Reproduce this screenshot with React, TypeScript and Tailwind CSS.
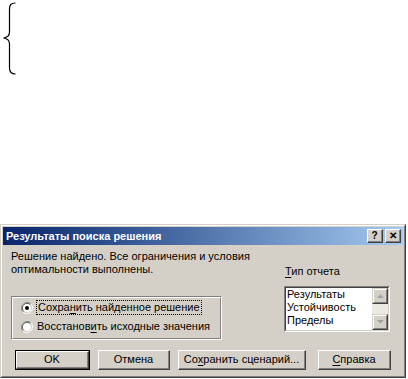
import React from 'react';

const font = { fontFamily: '"Liberation Sans", Arial, sans-serif' };

function Brace() {
  return (
    <svg width="18" height="76" viewBox="0 0 18 76" className="ml-[1px] mt-[1px]">
      <path
        d="M14.5 2 C10 2 8.5 4 8.5 8 L8.5 31 C8.5 35 6 36.5 2.5 37 C6 37.5 8.5 39 8.5 43 L8.5 67 C8.5 71 10 73 14.5 73"
        fill="none"
        stroke="#000"
        strokeWidth="1.2"
      />
    </svg>
  );
}

function U({ children }: { children: React.ReactNode }) {
  return <span className="underline underline-offset-[2px]">{children}</span>;
}

function Radio({ checked }: { checked?: boolean }) {
  return (
    <svg width="12" height="12" viewBox="0 0 12 12" className="shrink-0">
      <path d="M10.5 2.2 A5.5 5.5 0 1 0 2.2 10.5" fill="none" stroke="#808080" />
      <path d="M9.6 3 A4.5 4.5 0 1 0 3 9.6" fill="none" stroke="#404040" />
      <path d="M1.5 9.8 A5.5 5.5 0 0 0 9.8 1.5" fill="none" stroke="#fff" />
      <path d="M2.4 9 A4.5 4.5 0 0 0 9 2.4" fill="none" stroke="#d4d0c8" />
      <circle cx="6" cy="6" r="4" fill="#fff" />
      {checked && <circle cx="6" cy="6" r="2" fill="#000" />}
    </svg>
  );
}

function Btn({ children, w, def }: { children: React.ReactNode; w: string; def?: boolean }) {
  return (
    <div className={`${w} h-[20px] shrink-0 ${def ? 'border border-black' : ''} bg-[#d4d0c8]`}>
      <div className="h-full w-full border-t border-l border-white border-r border-b border-r-[#404040] border-b-[#404040]">
        <div className="flex h-full w-full items-center justify-center whitespace-nowrap border-r border-b border-[#808080] text-[11px] text-black">
          {children}
        </div>
      </div>
    </div>
  );
}

function ScrollArrow({ down }: { down?: boolean }) {
  return (
    <div className="h-[16px] w-[16px] bg-[#d4d0c8] border-t border-l border-[#d4d0c8] border-r border-b border-r-[#404040] border-b-[#404040]">
      <div className="flex h-full w-full items-center justify-center border-t border-l border-white border-r border-b border-r-[#808080] border-b-[#808080]">
        <svg width="7" height="4" viewBox="0 0 7 4">
          <path d={down ? 'M0 0 H7 L3.5 3.5 Z' : 'M0 4 H7 L3.5 0.5 Z'} fill="#a0a0a0" />
        </svg>
      </div>
    </div>
  );
}

function TitleButton({ children }: { children: React.ReactNode }) {
  return (
    <div className="h-[14px] w-[16px] bg-[#d4d0c8] border-t border-l border-white border-r border-b border-r-[#404040] border-b-[#404040]">
      <div className="flex h-full w-full items-center justify-center border-r border-b border-[#808080] text-[10px] font-bold leading-none text-black">
        {children}
      </div>
    </div>
  );
}

export default function App() {
  return (
    <div className="flex h-[379px] w-[408px] flex-col bg-white" style={font}>
      {/* formula brace */}
      <div className="h-[224px]">
        <Brace />
      </div>

      {/* dialog */}
      <div className="w-[406px] border border-t-[#d4d0c8] border-l-[#d4d0c8] border-r-[#404040] border-b-[#404040] bg-[#d4d0c8]">
        <div className="border border-t-white border-l-white border-r-[#808080] border-b-[#808080] p-[1px]">
          <div className="flex h-[18px] items-center justify-between bg-gradient-to-r from-[#0a246a] to-[#a6caf0] pl-[3px] pr-[2px]">
            <span className="text-[11px] font-bold text-white">Результаты поиска решения</span>
            <div className="flex gap-[2px]">
              <TitleButton>?</TitleButton>
              <TitleButton>✕</TitleButton>
            </div>
          </div>

          <div className="px-[8px] pt-[5px] pb-[5px] text-[11px] text-black">
            <div className="flex justify-between">
              <div className="w-[211px]">
                <p className="whitespace-nowrap leading-[13px]">
                  Решение найдено. Все ограничения и условия
                  <br />
                  оптимальности выполнены.
                </p>
                <div className="mt-[20px] h-[44px] border border-t-[#808080] border-l-[#808080] border-r-white border-b-white">
                  <div className="flex h-full flex-col gap-[5px] border border-t-white border-l-white border-r-[#808080] border-b-[#808080] pl-[8px] pt-[2px]">
                    <div className="flex items-center gap-[3px] whitespace-nowrap">
                      <Radio checked />
                      <span className="border border-dotted border-black px-[1px] leading-[13px]">
                        Сохра<U>н</U>ить найденное решение
                      </span>
                    </div>
                    <div className="flex items-center gap-[4px] whitespace-nowrap">
                      <Radio />
                      <span className="leading-[13px]">
                        Восстанов<U>и</U>ть исходные значения
                      </span>
                    </div>
                  </div>
                </div>
              </div>

              <div className="mr-[5px] w-[106px] pt-[15px]">
                <div className="pl-[1px] leading-[13px]">
                  <U>Т</U>ип отчета
                </div>
                <div className="mt-[8px] flex h-[46px] border border-t-[#808080] border-l-[#808080] border-r-white border-b-white">
                  <div className="flex flex-1 border border-t-[#404040] border-l-[#404040] border-r-[#d4d0c8] border-b-[#d4d0c8] bg-white">
                    <div className="flex-1 pl-[1px] leading-[13px]">
                      <div>Результаты</div>
                      <div>Устойчивость</div>
                      <div>Пределы</div>
                    </div>
                    <div className="flex w-[16px] flex-col justify-between bg-[#ece9e3]">
                      <ScrollArrow />
                      <ScrollArrow down />
                    </div>
                  </div>
                </div>
              </div>
            </div>

            <div className="mt-[10px] flex gap-[8px] pl-[4px]">
              <Btn w="w-[75px]" def>
                OK
              </Btn>
              <Btn w="w-[72px]">Отмена</Btn>
              <Btn w="w-[128px]">
                Со<U>х</U>ранить сценарий...
              </Btn>
              <div className="ml-[4px]">
                <Btn w="w-[73px]">
                  <U>С</U>правка
                </Btn>
              </div>
            </div>
          </div>
        </div>
      </div>
    </div>
  );
}
